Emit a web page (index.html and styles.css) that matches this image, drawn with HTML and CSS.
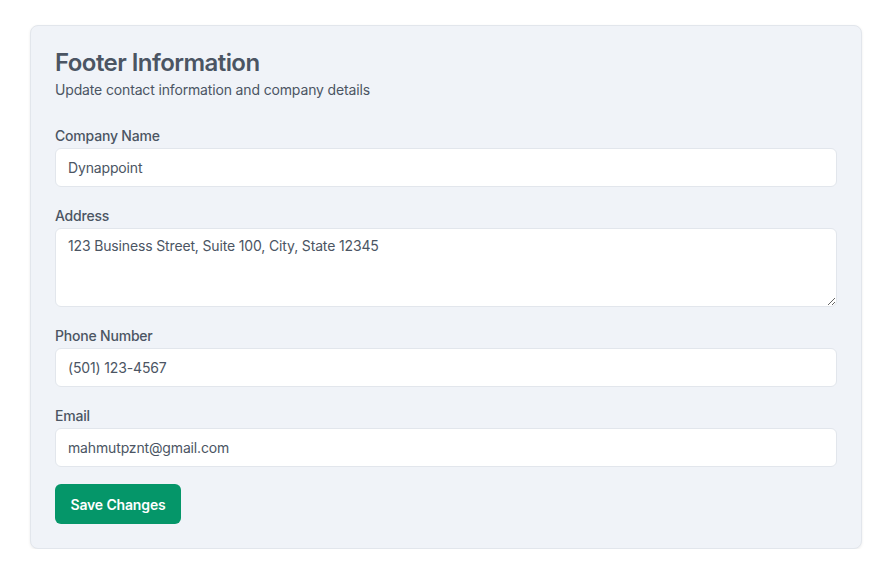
FILE: index.html
```html
<!DOCTYPE html>
<html>
<head>
<meta charset="utf-8">
<link rel="stylesheet" href="styles.css">
</head>
<body>
<div class="page">
  <form class="card">
    <div class="header">
      <h2 class="title">Footer Information</h2>
      <p class="subtitle">Update contact information and company details</p>
    </div>
    <div class="field">
      <label class="label">Company Name</label>
      <input class="input" type="text" value="Dynappoint">
    </div>
    <div class="field">
      <label class="label">Address</label>
      <textarea class="input textarea">123 Business Street, Suite 100, City, State 12345</textarea>
    </div>
    <div class="field">
      <label class="label">Phone Number</label>
      <input class="input" type="text" value="(501) 123-4567">
    </div>
    <div class="field field-last">
      <label class="label">Email</label>
      <input class="input" type="text" value="mahmutpznt@gmail.com">
    </div>
    <button class="btn" type="button">Save Changes</button>
  </form>
</div>
</body>
</html>
```

FILE: styles.css
```css
* { box-sizing: border-box; }
html, body { margin: 0; padding: 0; background: #ffffff; }
body { font-family: Inter, "Noto Sans", sans-serif; color: #475569; }
.page { padding: 25px 28px 0 30px; }
.card {
  width: 832px;
  background: #f0f3f8;
  border: 1px solid #e2e6ec;
  border-radius: 8px;
  box-shadow: 0 1px 3px rgba(0,0,0,0.08);
  padding: 25px 24px 24px 24px;
  display: flex;
  flex-direction: column;
}
.header { margin-bottom: 26px; }
.title {
  margin: 0;
  font-size: 24px;
  line-height: 24px;
  font-weight: 600;
  color: #4b5563;
  letter-spacing: -0.55px;
}
.subtitle {
  margin: 5px 0 0;
  font-size: 14px;
  line-height: 20px;
  color: #4b5563;
  letter-spacing: -0.15px;
}
.field { display: flex; flex-direction: column; margin-bottom: 19px; }
.field-last { margin-bottom: 17px; }
.label {
  font-size: 14px;
  line-height: 20px;
  font-weight: 500;
  color: #4b5563;
  margin-bottom: 2px;
  letter-spacing: -0.2px;
}
.input {
  height: 39px;
  width: 782px;
  border: 1px solid #e2e6ec;
  border-radius: 6px;
  background: #ffffff;
  padding: 0 12px;
  font-family: Inter, "Noto Sans", sans-serif;
  font-size: 14px;
  color: #4b5563;
  letter-spacing: -0.15px;
  outline: none;
}
.textarea {
  height: 79px;
  padding: 7px 12px;
  line-height: 20px;
  resize: vertical;
}
.btn {
  align-self: flex-start;
  width: 126px;
  height: 40px;
  border: none;
  border-radius: 6px;
  background: #059669;
  color: #ffffff;
  font-family: Inter, "Noto Sans", sans-serif;
  font-size: 14px;
  font-weight: 600;
  letter-spacing: -0.15px;
}
```
